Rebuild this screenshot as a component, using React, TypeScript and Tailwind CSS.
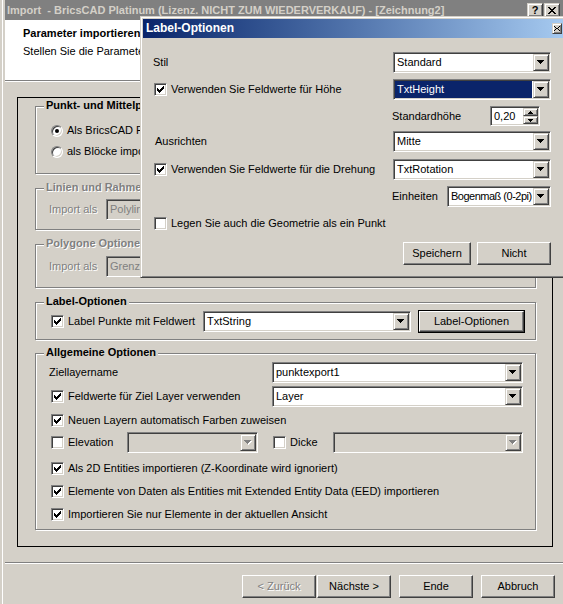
import type { ReactNode } from 'react';

// classic win2k bevels
const SUNKEN =
  'border border-t-[#808080] border-l-[#808080] border-b-white border-r-white shadow-[inset_1px_1px_0_#404040,inset_-1px_-1px_0_#d4d0c8]';
const RAISED =
  'border border-t-white border-l-white border-b-[#404040] border-r-[#404040] shadow-[inset_-1px_-1px_0_#808080]';
const DROP =
  'border border-t-[#d4d0c8] border-l-[#d4d0c8] border-b-[#404040] border-r-[#404040] shadow-[inset_1px_1px_0_#fff,inset_-1px_-1px_0_#808080]';
const ETCHED = 'border border-[#808080] shadow-[inset_1px_1px_0_#fff,1px_1px_0_#fff]';
const DIS = 'text-[#808080] [text-shadow:1px_1px_0_#fff]';

function Arrow({ disabled = false }: { disabled?: boolean }) {
  const d = 'M0 0h7v1H0z M1 1h5v1H1z M2 2h3v1H2z M3 3h1v1H3z';
  return (
    <svg width="8" height="5" viewBox="0 0 8 5" shapeRendering="crispEdges">
      {disabled && <path d={d} fill="#fff" transform="translate(1 1)" />}
      <path d={d} fill={disabled ? '#808080' : '#000'} />
    </svg>
  );
}

function DropBtn({ disabled = false }: { disabled?: boolean }) {
  return (
    <div className={`flex w-[16px] shrink-0 items-center justify-center bg-[#d4d0c8] ${DROP}`}>
      <Arrow disabled={disabled} />
    </div>
  );
}

function Combo({
  value,
  className = '',
  textClass = '',
  selected = false,
  disabled = false,
}: {
  value?: string;
  className?: string;
  textClass?: string;
  selected?: boolean;
  disabled?: boolean;
}) {
  return (
    <div className={`flex h-[21px] shrink-0 p-[1px] ${SUNKEN} ${disabled ? 'bg-[#d4d0c8]' : 'bg-white'} ${className}`}>
      <div
        className={`mr-[1px] flex min-w-0 flex-1 items-center overflow-hidden whitespace-nowrap pl-[2px] ${
          selected ? 'bg-[#0a246a] text-white' : ''
        } ${disabled ? 'text-[#808080]' : ''} ${textClass}`}
      >
        {value}
      </div>
      <DropBtn disabled={disabled} />
    </div>
  );
}

function Check({ checked = false }: { checked?: boolean }) {
  return (
    <div className={`flex h-[13px] w-[13px] shrink-0 items-center justify-center bg-white ${SUNKEN}`}>
      {checked && (
        <svg width="7" height="7" viewBox="0 0 7 7" shapeRendering="crispEdges">
          <path
            d="M6 0h1v3H6z M5 1h1v3H5z M4 2h1v3H4z M3 3h1v3H3z M2 4h1v3H2z M1 3h1v3H1z M0 2h1v3H0z"
            fill="#000"
          />
        </svg>
      )}
    </div>
  );
}

function CheckRow({ checked, children, className = '' }: { checked?: boolean; children: ReactNode; className?: string }) {
  return (
    <div className={`flex items-center gap-[4px] ${className}`}>
      <Check checked={checked} />
      <span className="whitespace-nowrap">{children}</span>
    </div>
  );
}

function Radio({ on = false }: { on?: boolean }) {
  return (
    <div className="flex h-[12px] w-[12px] shrink-0 items-center justify-center rounded-full border border-t-[#808080] border-l-[#808080] border-b-white border-r-white bg-white shadow-[inset_1px_1px_0_#404040,inset_-1px_-1px_0_#d4d0c8]">
      {on && <div className="h-[4px] w-[4px] rounded-full bg-black" />}
    </div>
  );
}

function Btn({
  children,
  className = '',
  disabled = false,
  isDefault = false,
}: {
  children: ReactNode;
  className?: string;
  disabled?: boolean;
  isDefault?: boolean;
}) {
  const inner = (
    <div className={`flex h-full w-full items-center justify-center bg-[#d4d0c8] ${RAISED} ${disabled ? DIS : ''}`}>
      {children}
    </div>
  );
  if (isDefault) return <div className={`h-[23px] shrink-0 border border-black ${className}`}>{inner}</div>;
  return <div className={`h-[23px] shrink-0 ${className}`}>{inner}</div>;
}

function Group({
  title,
  disabled = false,
  className = '',
  children,
}: {
  title: string;
  disabled?: boolean;
  className?: string;
  children?: ReactNode;
}) {
  return (
    <div className={`relative w-[501px] shrink-0 ${ETCHED} ${className}`}>
      <span
        className={`absolute -top-[8px] left-[8px] bg-[#d4d0c8] px-[2px] font-bold whitespace-nowrap ${
          disabled ? DIS : ''
        }`}
      >
        {title}
      </span>
      {children}
    </div>
  );
}

function TitleGlyphBtn({ children }: { children: ReactNode }) {
  return (
    <div className={`flex h-[14px] w-[16px] items-center justify-center bg-[#d4d0c8] ${DROP}`}>{children}</div>
  );
}

function LabelDialog() {
  return (
    <div className="absolute top-[16px] left-[140px] flex h-[262px] w-[426px] flex-col border border-t-[#d4d0c8] border-l-[#d4d0c8] border-b-[#404040] border-r-[#404040] bg-[#d4d0c8] p-[1px] shadow-[inset_1px_1px_0_#fff,inset_-1px_-1px_0_#808080]">
      <div className="m-[1px] flex h-[19px] shrink-0 items-center justify-between bg-linear-to-r from-[#0a246a] to-[#a6caf0] pl-[3px]">
        <span className="text-[12px] font-bold text-white">Label-Optionen</span>
        <div className={`mr-[1px] flex h-[11px] w-[10px] items-center justify-center bg-[#d4d0c8] ${DROP}`}>
          <svg width="6" height="5" viewBox="0 0 6 5" shapeRendering="crispEdges">
            <path d="M0 0h1v1H0z M5 0h1v1H5z M1 1h1v1H1z M4 1h1v1H4z M2 2h2v1H2z M1 3h1v1H1z M4 3h1v1H4z M0 4h1v1H0z M5 4h1v1H5z" fill="#000" />
          </svg>
        </div>
      </div>

      <div className="flex flex-col pl-[11px]">
        <div className="mt-[13px] flex h-[21px] items-center">
          <span className="w-[240px]">Stil</span>
          <Combo value="Standard" className="w-[158px]" />
        </div>
        <div className="mt-[6px] flex h-[21px] items-center">
          <CheckRow checked className="ml-[1px] w-[239px]">
            Verwenden Sie Feldwerte für Höhe
          </CheckRow>
          <Combo value="TxtHeight" selected className="w-[158px]" />
        </div>
        <div className="mt-[6px] flex h-[20px] items-center">
          <span className="ml-[239px] w-[98px]">Standardhöhe</span>
          <div className={`flex h-[20px] w-[50px] bg-white p-[1px] ${SUNKEN}`}>
            <span className="flex flex-1 items-center pl-[2px]">0,20</span>
            <div className="flex w-[15px] flex-col">
              <div className={`flex flex-1 items-center justify-center bg-[#d4d0c8] ${DROP}`}>
                <svg width="5" height="3" viewBox="0 0 5 3" shapeRendering="crispEdges">
                  <path d="M2 0h1v1H2z M1 1h3v1H1z M0 2h5v1H0z" fill="#000" />
                </svg>
              </div>
              <div className={`flex flex-1 items-center justify-center bg-[#d4d0c8] ${DROP}`}>
                <svg width="5" height="3" viewBox="0 0 5 3" shapeRendering="crispEdges">
                  <path d="M0 0h5v1H0z M1 1h3v1H1z M2 2h1v1H2z" fill="#000" />
                </svg>
              </div>
            </div>
          </div>
        </div>
        <div className="mt-[5px] flex h-[21px] items-center">
          <span className="ml-[2px] w-[238px]">Ausrichten</span>
          <Combo value="Mitte" className="w-[158px]" />
        </div>
        <div className="mt-[7px] flex h-[21px] items-center">
          <CheckRow checked className="ml-[1px] w-[239px]">
            Verwenden Sie Feldwerte für die Drehung
          </CheckRow>
          <Combo value="TxtRotation" className="w-[158px]" />
        </div>
        <div className="mt-[6px] flex h-[21px] items-center">
          <span className="ml-[239px] w-[55px]">Einheiten</span>
          <Combo value="Bogenmaß (0-2pi)" textClass="pl-[1px] tracking-[-0.5px]" className="w-[104px]" />
        </div>
        <CheckRow className="mt-[10px] ml-[1px] h-[13px]">Legen Sie auch die Geometrie als ein Punkt</CheckRow>
        <div className="mt-[12px] flex w-[398px] justify-end gap-[6px]">
          <Btn className="w-[68px]">Speichern</Btn>
          <Btn className="w-[74px]">Nicht</Btn>
        </div>
      </div>
    </div>
  );
}

export default function App() {
  return (
    <div className="relative h-[604px] w-[563px] overflow-hidden bg-[#d4d0c8] font-['Liberation_Sans',Arial,sans-serif] text-[11px] leading-[13px] text-black">
      <div className="flex h-full">
        <div className="w-[2px] shrink-0" />
        <div className="w-[1px] shrink-0 bg-white" />
        <div className="w-[2px] shrink-0" />
        <div className="flex min-w-0 flex-1 flex-col">
          {/* main window title bar (inactive) */}
          <div className="flex h-[20px] shrink-0 items-center justify-between bg-[#808080] pl-[2px]">
            <span className="text-[11px] font-bold whitespace-pre text-[#d4d0c8]">
              Import  - BricsCAD Platinum (Lizenz. NICHT ZUM WIEDERVERKAUF) - [Zeichnung2]
            </span>
            <div className="mr-[3px] flex gap-[1px]">
              <TitleGlyphBtn>
                <span className="text-[11px] leading-none font-bold">?</span>
              </TitleGlyphBtn>
              <TitleGlyphBtn>
                <svg width="8" height="7" viewBox="0 0 8 7" shapeRendering="crispEdges">
                  <path d="M0 0h2v1H0z M6 0h2v1H6z M1 1h2v1H1z M5 1h2v1H5z M2 2h4v1H2z M3 3h2v1H3z M2 4h4v1H2z M1 5h2v1H1z M5 5h2v1H5z M0 6h2v1H0z M6 6h2v1H6z" fill="#000" />
                </svg>
              </TitleGlyphBtn>
            </div>
          </div>

          {/* wizard header */}
          <div className="flex h-[60px] shrink-0 flex-col bg-white pt-[7px] pl-[18px]">
            <span className="font-bold">Parameter importieren</span>
            <span className="mt-[5px]">Stellen Sie die Parameter für den Import ein.</span>
          </div>
          <div className="h-[1px] shrink-0 bg-[#808080]" />
          <div className="h-[1px] shrink-0 bg-white" />

          {/* options frame */}
          <div className="mt-[15px] ml-[12px] flex h-[450px] w-[536px] shrink-0 flex-col border border-black pl-[17px]">
            <Group title="Punkt- und Mittelpunktoptionen" className="mt-[8px] h-[68px] pt-[13px] pl-[15px]">
              <div className="flex h-[21px] items-center gap-[4px]">
                <Radio on />
                <span>Als BricsCAD Punkte importieren</span>
              </div>
              <div className="flex h-[21px] items-center gap-[4px]">
                <Radio />
                <span>als Blöcke importieren</span>
              </div>
            </Group>

            <Group title="Linien und Rahmenoptionen" disabled className="mt-[14px] h-[42px] pt-[10px] pl-[13px]">
              <div className="flex h-[20px] items-center">
                <span className={`w-[57px] ${DIS}`}>Import als</span>
                <Combo value="Polylinien" disabled className="h-[20px] w-[200px]" />
              </div>
            </Group>

            <Group title="Polygone Optionen" disabled className="mt-[14px] h-[44px] pt-[11px] pl-[13px]">
              <div className="flex h-[20px] items-center">
                <span className={`w-[57px] ${DIS}`}>Import als</span>
                <Combo value="Grenzen" disabled className="h-[20px] w-[200px]" />
              </div>
            </Group>

            <Group title="Label-Optionen" className="mt-[14px] h-[38px] pt-[7px] pl-[15px]">
              <div className="flex h-[23px] items-center">
                <CheckRow checked className="w-[152px]">
                  Label Punkte mit Feldwert
                </CheckRow>
                <Combo value="TxtString" className="w-[208px]" />
                <Btn isDefault className="ml-[7px] w-[107px]">
                  Label-Optionen
                </Btn>
              </div>
            </Group>

            <Group title="Allgemeine Optionen" className="mt-[13px] h-[177px] pt-[8px] pl-[15px]">
              <div className="flex h-[21px] items-center">
                <span className="-ml-[2px] w-[223px]">Ziellayername</span>
                <Combo value="punktexport1" className="w-[251px]" />
              </div>
              <div className="mt-[3px] flex h-[21px] items-center">
                <CheckRow checked className="w-[221px]">
                  Feldwerte für Ziel Layer verwenden
                </CheckRow>
                <Combo value="Layer" className="w-[251px]" />
              </div>
              <CheckRow checked className="mt-[3px] h-[21px]">
                Neuen Layern automatisch Farben zuweisen
              </CheckRow>
              <div className="mt-[1px] flex h-[21px] items-center">
                <CheckRow className="w-[76px]">Elevation</CheckRow>
                <Combo disabled className="w-[131px]" />
                <CheckRow className="ml-[15px] w-[60px]">Dicke</CheckRow>
                <Combo disabled className="w-[190px]" />
              </div>
              <CheckRow checked className="mt-[4px] h-[23px]">
                Als 2D Entities importieren (Z-Koordinate wird ignoriert)
              </CheckRow>
              <CheckRow checked className="h-[23px]">
                Elemente von Daten als Entities mit Extended Entity Data (EED) importieren
              </CheckRow>
              <CheckRow checked className="h-[23px]">
                Importieren Sie nur Elemente in der aktuellen Ansicht
              </CheckRow>
            </Group>
          </div>

          <div className="mt-[15px] h-[1px] shrink-0 bg-[#808080]" />
          <div className="h-[1px] shrink-0 bg-white" />

          {/* wizard buttons */}
          <div className="mt-[11px] flex shrink-0 pl-[237px]">
            <Btn disabled className="w-[74px]">
              &lt; Zurück
            </Btn>
            <Btn className="ml-[1px] w-[74px]">Nächste &gt;</Btn>
            <Btn className="ml-[8px] w-[74px]">Ende</Btn>
            <Btn className="ml-[8px] w-[74px]">Abbruch</Btn>
          </div>
        </div>
      </div>

      <LabelDialog />
    </div>
  );
}
